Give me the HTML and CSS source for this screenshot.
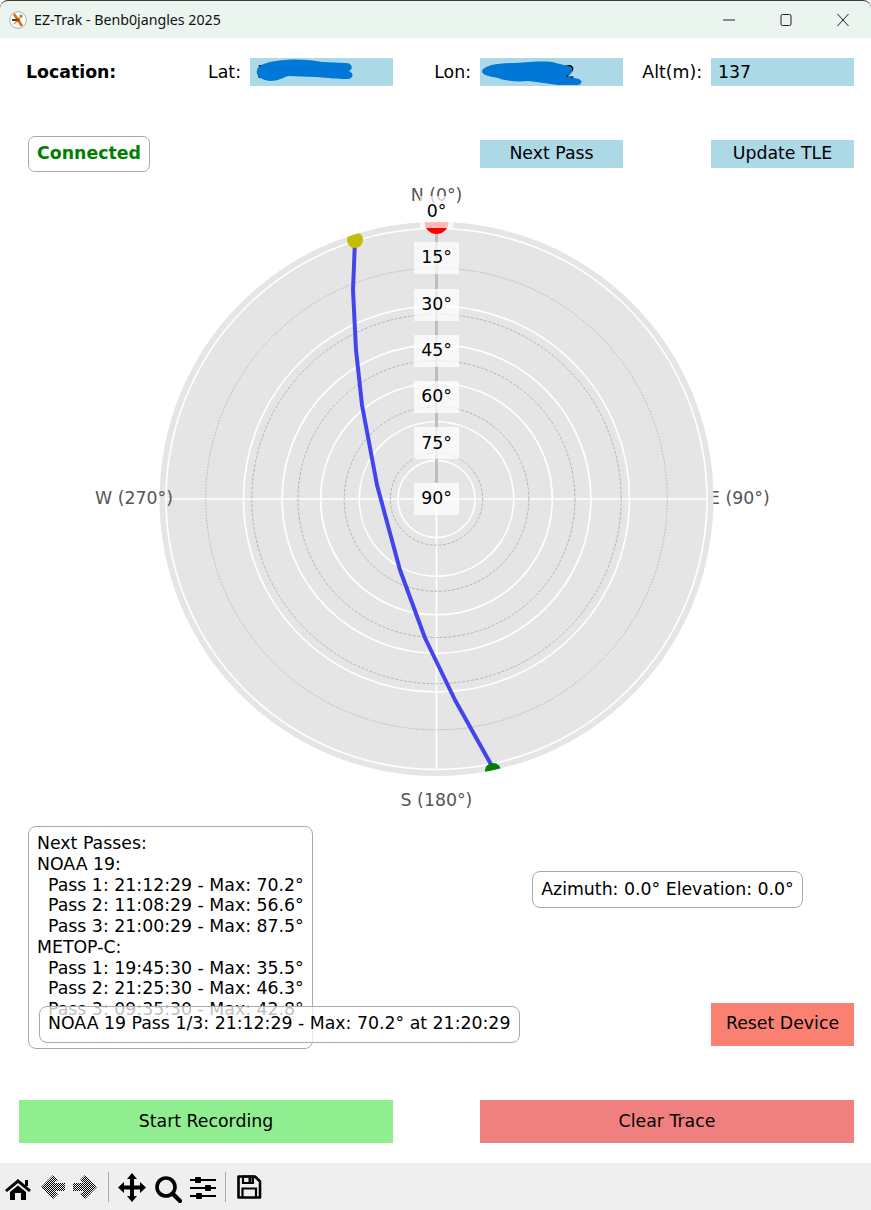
FILE: index.html

```html
<!DOCTYPE html>
<html lang="en">
<head>
  <meta charset="UTF-8">
  <title>EZ-Trak</title>
  <link rel="stylesheet" href="styles.css">
</head>
<body>
  <div class="titlebar">
    <svg class="app-logo" width="18" height="18" viewBox="0 0 18 18">
      <circle cx="9" cy="9" r="8.3" fill="#fff" stroke="#999" stroke-width="0.8"/>
      <path d="M5 3 L13 15" stroke="#e06a10" stroke-width="2.6"/>
      <path d="M5 13 L13 5" stroke="#e0a020" stroke-width="1.6"/>
      <path d="M3 9 L8 9" stroke="#444" stroke-width="2"/>
      <circle cx="12" cy="5" r="1.6" fill="#7a9a30"/>
      <circle cx="9" cy="9" r="1.8" fill="#c83010"/>
    </svg>
    <span class="app-title">EZ-Trak - Benb0jangles 2025</span>
    <div class="win-controls">
      <svg width="14" height="14" viewBox="0 0 14 14"><path d="M1 7H13" stroke="#222" stroke-width="1"/></svg>
      <svg width="14" height="14" viewBox="0 0 14 14"><rect x="2" y="1.5" width="10" height="11" rx="1.5" fill="none" stroke="#222" stroke-width="1"/></svg>
      <svg width="14" height="14" viewBox="0 0 14 14"><path d="M1.5 1L12.5 13M12.5 1L1.5 13" stroke="#222" stroke-width="1"/></svg>
    </div>
  </div>

  <div class="location-row">
    <div class="location-cell">
      <b class="location-title">Location:</b>
      <span>Lat:</span>
    </div>
    <div class="field">5
      <svg class="scribble" width="110" height="28" viewBox="0 0 110 28">
        <path d="M7 12 C8 6 20 3 35 2 C50 1 62 2 72 4 L96 5 C102 5 104 11 99 13 C104 15 104 21 97 21 C88 21 78 20 65 19 L38 18 C32 20 28 23 20 23 C12 22 5 18 7 12Z" fill="#0078d7"/>
      </svg>
    </div>
    <div class="cell-label">Lon:</div>
    <div class="field field-lon">
      <span>2</span>
      <svg class="scribble" width="110" height="30" viewBox="0 0 110 30">
        <path d="M2 13 C4 7 20 5 35 5 C50 4 62 3 72 4 L84 7 C92 8 94 13 90 16 L85 18 L99 21 C103 23 102 27 97 27 L78 27 C68 26 60 24 48 23 C38 24 25 23 18 20 C8 18 2 17 2 13Z" fill="#0078d7"/>
      </svg>
    </div>
    <div class="cell-label">Alt(m):</div>
    <div class="field">137</div>
  </div>

  <div class="status-row">
    <div class="status-badge">Connected</div>
    <div class="btn-blue btn-next">Next Pass</div>
    <div class="btn-blue btn-tle">Update TLE</div>
  </div>

  <svg class="polar" width="871" height="654" viewBox="0 172 871 654">
    <defs>
      <clipPath id="discClip"><circle cx="436.5" cy="499" r="277"/></clipPath>
    </defs>
    <text class="axis-label" x="436.5" y="201" text-anchor="middle">N (0°)</text>
    <text class="axis-label" x="709" y="504">E (90°)</text>
    <text class="axis-label" x="436.5" y="806" text-anchor="middle">S (180°)</text>

    <circle cx="436.5" cy="499" r="277" fill="#e5e5e5"/>
    <g fill="none" stroke="#fff" stroke-width="1.6">
      <circle cx="436.5" cy="499" r="38.6"/>
      <circle cx="436.5" cy="499" r="77.2"/>
      <circle cx="436.5" cy="499" r="115.8"/>
      <circle cx="436.5" cy="499" r="154.4"/>
      <circle cx="436.5" cy="499" r="193"/>
      <circle cx="436.5" cy="499" r="270.5"/>
      <path d="M166 499H707M436.5 228V770"/>
    </g>
    <g fill="none" stroke="#b4b4b4" stroke-width="1" stroke-dasharray="3 1.5">
      <circle cx="436.5" cy="499" r="46.2"/>
      <circle cx="436.5" cy="499" r="92.3"/>
      <circle cx="436.5" cy="499" r="138.5"/>
      <circle cx="436.5" cy="499" r="184.7"/>
      <circle cx="436.5" cy="499" r="230.8" stroke-dasharray="1.5 1.5"/>
    </g>
    <path d="M436.5 222V483" stroke="#bdbdbd" stroke-width="3"/>

    <polyline points="355,240 353,290 356,350 362,405 377,485 400,570 425,638 455,700 493,768" fill="none" stroke="#4444ee" stroke-width="4" stroke-linejoin="round"/>
    <g clip-path="url(#discClip)">
      <circle cx="436.5" cy="222" r="12" fill="#ff0000"/>
      <circle cx="355" cy="240" r="8" fill="#c4bc00"/>
      <circle cx="493" cy="771" r="8" fill="#008000"/>
    </g>

    <g fill="#fff" fill-opacity="0.72">
      <rect x="420" y="196" width="33" height="32"/>
      <rect x="414" y="242" width="45" height="32"/>
      <rect x="414" y="289" width="45" height="32"/>
      <rect x="414" y="335" width="45" height="32"/>
      <rect x="414" y="381" width="45" height="32"/>
      <rect x="414" y="427" width="45" height="32"/>
      <rect x="414" y="483" width="45" height="32"/>
    </g>
    <g class="elev-label" text-anchor="middle">
      <text x="436.5" y="217">0°</text>
      <text x="436.5" y="263">15°</text>
      <text x="436.5" y="310">30°</text>
      <text x="436.5" y="356">45°</text>
      <text x="436.5" y="402">60°</text>
      <text x="436.5" y="449">75°</text>
      <text x="436.5" y="504">90°</text>
    </g>
    <text class="axis-label" x="95" y="504">W (270°)</text>
  </svg>

  <div class="info">
    <div class="passes">Next Passes:
NOAA 19:
  Pass 1: 21:12:29 - Max: 70.2°
  Pass 2: 11:08:29 - Max: 56.6°
  Pass 3: 21:00:29 - Max: 87.5°
METOP-C:
  Pass 1: 19:45:30 - Max: 35.5°
  Pass 2: 21:25:30 - Max: 46.3°
  Pass 3: 09:35:30 - Max: 42.8°</div>
    <div class="current-pass">NOAA 19 Pass 1/3: 21:12:29 - Max: 70.2° at 21:20:29</div>
    <div class="info-side">
      <div class="azimuth">Azimuth: 0.0° Elevation: 0.0°</div>
      <div class="btn-reset">Reset Device</div>
    </div>
  </div>

  <div class="action-row">
    <div class="btn-action btn-record">Start Recording</div>
    <div class="btn-action btn-clear">Clear Trace</div>
  </div>

  <div class="toolbar">
    <svg class="tool" viewBox="0 0 32 32"><path d="M16 8L29 19L27 21L16 12L5 21L3 19Z"/><rect x="23" y="9" width="3" height="6"/><path d="M8 21L16 14.5L24 21V29H19V22H13V29H8Z"/></svg>
    <svg class="tool" viewBox="0 0 32 32">
      <defs><pattern id="dither" width="2" height="2" patternUnits="userSpaceOnUse"><rect width="1" height="1" fill="#000"/><rect x="1" y="1" width="1" height="1" fill="#000"/></pattern></defs>
      <path d="M5 16L17 4L22 9L18 12H29V20H18L22 23L17 28Z" fill="url(#dither)"/>
    </svg>
    <svg class="tool" viewBox="0 0 32 32"><path d="M27 16L15 4L10 9L14 12H3V20H14L10 23L15 28Z" fill="url(#dither)"/></svg>
    <span class="tool-sep sep-a"></span>
    <svg class="tool" viewBox="0 0 32 32"><path d="M16 2L21 8H18V14.5H24V11L30 16.5L24 22V18.5H18V25H21L16 31L11 25H14V18.5H8V22L2 16.5L8 11V14.5H14V8H11Z"/></svg>
    <svg class="tool" viewBox="0 0 32 32"><circle cx="16" cy="16" r="9" fill="none" stroke="#000" stroke-width="3.6"/><path d="M22.5 22.5L30 30" stroke="#000" stroke-width="4.2" stroke-linecap="round"/></svg>
    <svg class="tool" viewBox="0 0 32 32"><path d="M6 9H32M6 17H32M6 25H32" stroke="#000" stroke-width="2"/><rect x="11" y="6" width="6" height="6" rx="1"/><rect x="21" y="14" width="6" height="6" rx="1"/><rect x="12" y="22" width="6" height="6" rx="1"/></svg>
    <span class="tool-sep sep-b"></span>
    <svg class="tool" viewBox="0 0 32 32"><path d="M5.5 5.5H22L27 10.5V26.5H5.5Z" fill="none" stroke="#000" stroke-width="2.6" stroke-linejoin="round"/><path d="M10 5.5H20V12H10Z" fill="none" stroke="#000" stroke-width="2.2"/><rect x="15.5" y="6.5" width="3" height="4.5"/><path d="M9.5 26.5V17.5H23V26.5" fill="none" stroke="#000" stroke-width="2.2"/></svg>
  </div>
</body>
</html>
```

FILE: styles.css

```css
* { box-sizing: border-box; }
html, body { margin: 0; padding: 0; }
body {
  width: 871px; height: 1210px; overflow: hidden;
  background: white; color: black;
  font-family: "DejaVu Sans", sans-serif; font-size: 17.33px;
}

.titlebar {
  height: 38px; display: flex; align-items: center;
  background: #eaf5f0; border-top: 1px solid #3a3a3a;
  border-radius: 8px 8px 0 0;
  padding-left: 9px;
}
.app-logo { flex: none; }
.app-title { margin-left: 7px; font-family: "Noto Sans", sans-serif; font-size: 14.2px; color: #111; }
.win-controls { margin-left: auto; display: flex; gap: 43px; padding-right: 21px; }

.location-row {
  display: grid; grid-template-columns: 231px 143px 87px 143px 88px 143px;
  margin: 20px 0 0 19px; height: 28px; line-height: 26px;
}
.location-cell { display: flex; justify-content: space-between; align-items: center; padding: 0 9px 0 7px; }
.location-title { font-weight: bold; }
.cell-label { display: flex; align-items: center; justify-content: flex-end; padding-right: 9px; }
.field { position: relative; background: lightblue; display: flex; align-items: center; padding-left: 7px; }
.field-lon { justify-content: flex-end; padding-right: 48px; }
.scribble { position: absolute; left: 0; top: 0; }

.status-row { display: flex; align-items: center; height: 36px; margin: 50px 0 0 28px; }
.status-badge {
  width: 122px; height: 36px; line-height: 33px; text-align: center;
  border: 1px solid #aaa; border-radius: 7px;
  color: green; font-weight: bold; font-size: 17.33px;
}
.btn-blue { width: 143px; height: 28px; line-height: 27px; text-align: center; background: lightblue; }
.btn-next { margin-left: 330px; }
.btn-tle { margin-left: 88px; }

.polar { display: block; }
.axis-label { fill: #555; font-size: 17.33px; }
.elev-label { fill: #000; font-size: 17.33px; }

.info { position: relative; display: flex; height: 274px; }
.passes {
  width: 285px; height: 223px; margin-left: 28px; padding: 6px 8px;
  border: 1px solid #aaa; border-radius: 8px;
  white-space: pre; line-height: 20.75px;
}
.current-pass {
  position: absolute; left: 39px; top: 180px;
  width: 481px; height: 37px; line-height: 33px; padding-left: 8px;
  background: rgba(255, 255, 255, 0.75);
  border: 1px solid #aaa; border-radius: 8px;
}
.info-side { flex: 1; display: flex; flex-direction: column; }
.azimuth {
  width: 271px; height: 37px; line-height: 34px; text-align: center;
  margin: 45px 0 0 219px;
  border: 1px solid #aaa; border-radius: 8px;
}
.btn-reset {
  width: 143px; height: 43px; line-height: 40px; text-align: center;
  margin: 95px 0 0 398px;
  background: salmon;
}

.action-row { display: flex; gap: 87px; padding-left: 19px; }
.btn-action { width: 374px; height: 43px; line-height: 42px; text-align: center; }
.btn-record { background: lightgreen; }
.btn-clear { background: lightcoral; }

.toolbar {
  display: flex; align-items: center; gap: 2px;
  height: 47px; margin-top: 20px; padding-left: 2px;
  background: #efefef;
}
.tool { width: 32px; height: 32px; flex: none; }
.tool-sep { width: 1px; height: 30px; background: #aaa; flex: none; }
.sep-a { margin: 0 5px 0 4px; }
.sep-b { margin: 0 5px 0 7px; }
```
